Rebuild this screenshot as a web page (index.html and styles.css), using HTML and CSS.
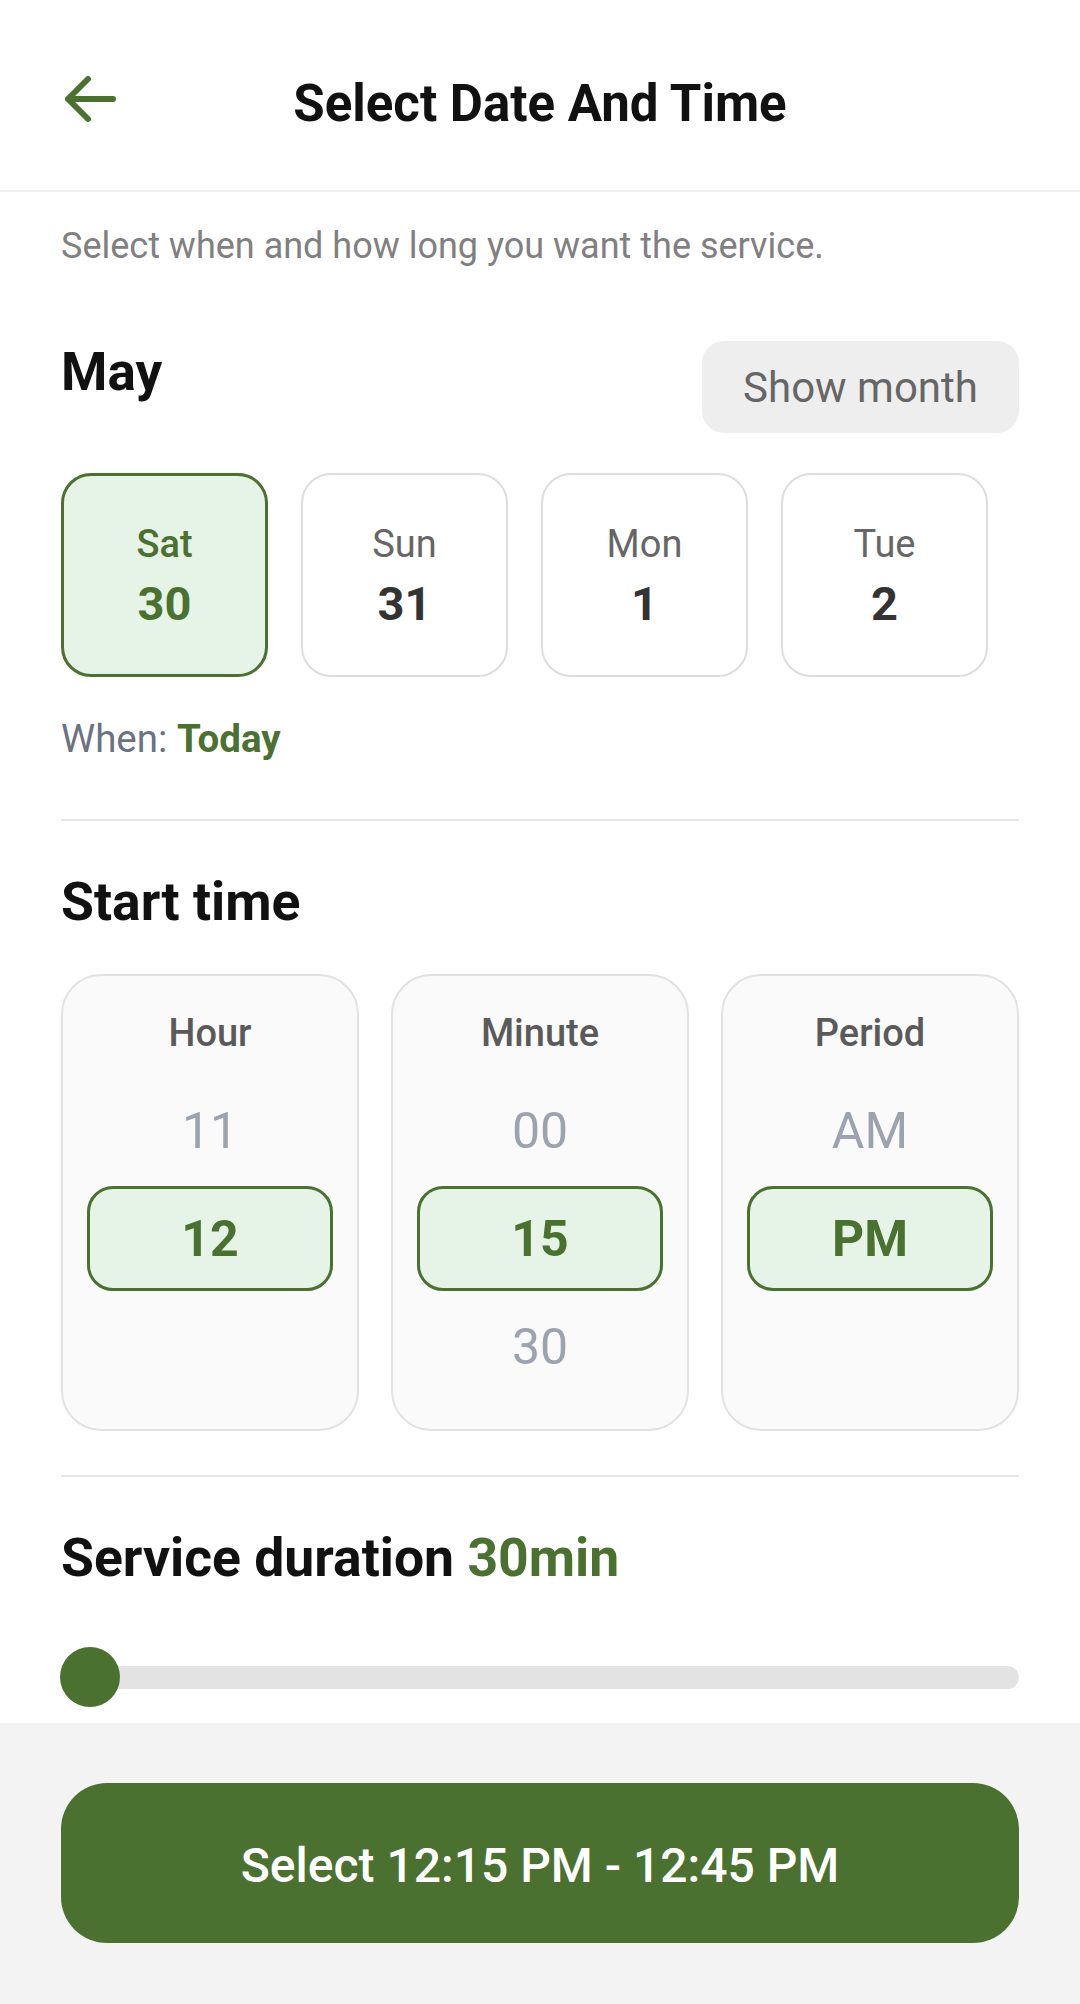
FILE: index.html
```html
<!DOCTYPE html>
<html lang="en">

<head>
    <meta charset="UTF-8">
    <meta name="viewport" content="width=device-width, initial-scale=1.0">
    <title>Select Date And Time</title>
    <link rel="stylesheet" href="styles.css">
</head>

<body>

    <!-- top bar -->

    <header class="topbar">
        <a class="back">
            <svg width="56" height="56" viewBox="0 0 56 56" fill="none" stroke="#4a7130" stroke-width="6"
                stroke-linecap="round" stroke-linejoin="round">
                <path d="M52 28 H7 M27 8 L7 28 L27 48" />
            </svg>
        </a>
        <h1>Select Date And Time</h1>
        <span></span>
    </header>

    <main>
        <p class="intro">Select when and how long you want the service.</p>

        <!-- date part -->

        <div class="month-row">
            <h2>May</h2>
            <button class="show-month">Show month</button>
        </div>

        <div class="days">
            <div class="day selected">
                <span class="name">Sat</span>
                <span class="num">30</span>
            </div>
            <div class="day">
                <span class="name">Sun</span>
                <span class="num">31</span>
            </div>
            <div class="day">
                <span class="name">Mon</span>
                <span class="num">1</span>
            </div>
            <div class="day">
                <span class="name">Tue</span>
                <span class="num">2</span>
            </div>
        </div>

        <p class="when">When: <b>Today</b></p>

        <hr>

        <!-- time part -->

        <h2 class="section">Start time</h2>

        <div class="pickers">
            <div class="picker">
                <div class="label">Hour</div>
                <div class="wheel">
                    <div class="item">11</div>
                    <div class="item active">12</div>
                    <div class="item"></div>
                </div>
            </div>
            <div class="picker">
                <div class="label">Minute</div>
                <div class="wheel">
                    <div class="item">00</div>
                    <div class="item active">15</div>
                    <div class="item">30</div>
                </div>
            </div>
            <div class="picker">
                <div class="label">Period</div>
                <div class="wheel">
                    <div class="item">AM</div>
                    <div class="item active">PM</div>
                    <div class="item"></div>
                </div>
            </div>
        </div>

        <hr class="second">

        <!-- duration part -->

        <h2 class="section">Service duration <span class="green">30min</span></h2>

        <div class="slider">
            <div class="track"></div>
            <div class="knob"></div>
        </div>
    </main>

    <footer>
        <button class="confirm">Select 12:15 PM - 12:45 PM</button>
    </footer>

</body>

</html>
```

FILE: styles.css
```css
* {
    margin: 0;
    padding: 0;
    box-sizing: border-box;
}

html,
body {
    height: 100%;
}

body {
    font-family: Roboto, "Noto Sans", sans-serif;
    background-color: #fff;
    color: #111;
    display: flex;
    flex-direction: column;
}

/* header */

.topbar {
    height: 194px;
    padding: 16px 61px 0 61px;
    display: grid;
    grid-template-columns: 1fr auto 1fr;
    align-items: center;
    border-bottom: 2px solid #eeeeee;
}

.topbar .back {
    display: flex;
    align-items: center;
    margin-top: -8px;
}

.topbar h1 {
    font-size: 51px;
    line-height: 1.2;
    font-weight: 700;
    color: #111;
}

/* content */

main {
    padding: 0 61px;
    flex: 1;
}

.intro {
    margin-top: 33px;
    font-size: 36px;
    line-height: 1.2;
    color: #808080;
}

.month-row {
    margin-top: 73px;
    display: flex;
    justify-content: space-between;
    align-items: flex-start;
}

.month-row h2 {
    font-size: 53px;
    line-height: 1.2;
    font-weight: 700;
    margin-top: 0;
}

.show-month {
    width: 317px;
    height: 92px;
    border: none;
    border-radius: 22px;
    background-color: #eeeeee;
    color: #666;
    font-family: Roboto, sans-serif;
    font-size: 42px;
}

.days {
    margin-top: 40px;
    display: flex;
    gap: 33px;
}

.day {
    width: 207px;
    height: 204px;
    border: 2px solid #dddddd;
    border-radius: 30px;
    display: flex;
    flex-direction: column;
    align-items: center;
    justify-content: center;
    gap: 8px;
    padding-top: 4px;
}

.day .name {
    font-size: 38px;
    line-height: 1.2;
    color: #666;
}

.day .num {
    font-size: 47px;
    line-height: 1.2;
    font-weight: 700;
    color: #333;
}

.day.selected {
    background-color: #e6f4e8;
    border: 3px solid #4a7130;
}

.day.selected .name,
.day.selected .num {
    color: #4a7130;
}

.day.selected .name {
    font-weight: 500;
}

.when {
    margin-top: 39px;
    font-size: 38.5px;
    line-height: 1.2;
    color: #6b7280;
}

.when b {
    color: #4a7130;
}

hr {
    margin-top: 56px;
    border: none;
    height: 2px;
    background-color: #e6e6e6;
}

hr.second {
    margin-top: 44px;
}

.section {
    margin-top: 49px;
    font-size: 53.5px;
    line-height: 1.2;
    font-weight: 700;
}

.section .green {
    color: #4a7130;
}

/* time pickers */

.pickers {
    margin-top: 40px;
    display: grid;
    grid-template-columns: 1fr 1fr 1fr;
    gap: 32px;
}

.picker {
    height: 457px;
    background-color: #fafafa;
    border: 2px solid #e2e2e2;
    border-radius: 40px;
    padding: 35px 24px 0 24px;
}

.picker .label {
    text-align: center;
    font-size: 38px;
    line-height: 1.2;
    font-weight: 500;
    color: #5a5a5a;
}

.wheel {
    margin-top: 22px;
    display: flex;
    flex-direction: column;
    gap: 3px;
}

.wheel .item {
    height: 105px;
    display: flex;
    align-items: center;
    justify-content: center;
    font-size: 50px;
    color: #9ca3af;
}

.wheel .item.active {
    background-color: #e6f4e8;
    border: 3px solid #4a7130;
    border-radius: 26px;
    color: #4a7130;
    font-weight: 700;
}

/* slider */

.slider {
    margin-top: 57px;
    height: 60px;
    position: relative;
    display: flex;
    align-items: center;
}

.slider .track {
    width: 100%;
    height: 23px;
    border-radius: 12px;
    background-color: #e3e3e3;
}

.slider .knob {
    position: absolute;
    left: -1px;
    top: 0;
    width: 60px;
    height: 60px;
    border-radius: 50%;
    background-color: #4a7130;
}

/* footer */

footer {
    margin-top: 16px;
    background-color: #f3f3f3;
    padding: 60px 61px 61px 61px;
}

.confirm {
    width: 100%;
    height: 160px;
    border: none;
    border-radius: 46px;
    background-color: #4a7130;
    color: #fff;
    font-family: Roboto, sans-serif;
    font-size: 48px;
    font-weight: 500;
    padding-top: 4px;
}
```
